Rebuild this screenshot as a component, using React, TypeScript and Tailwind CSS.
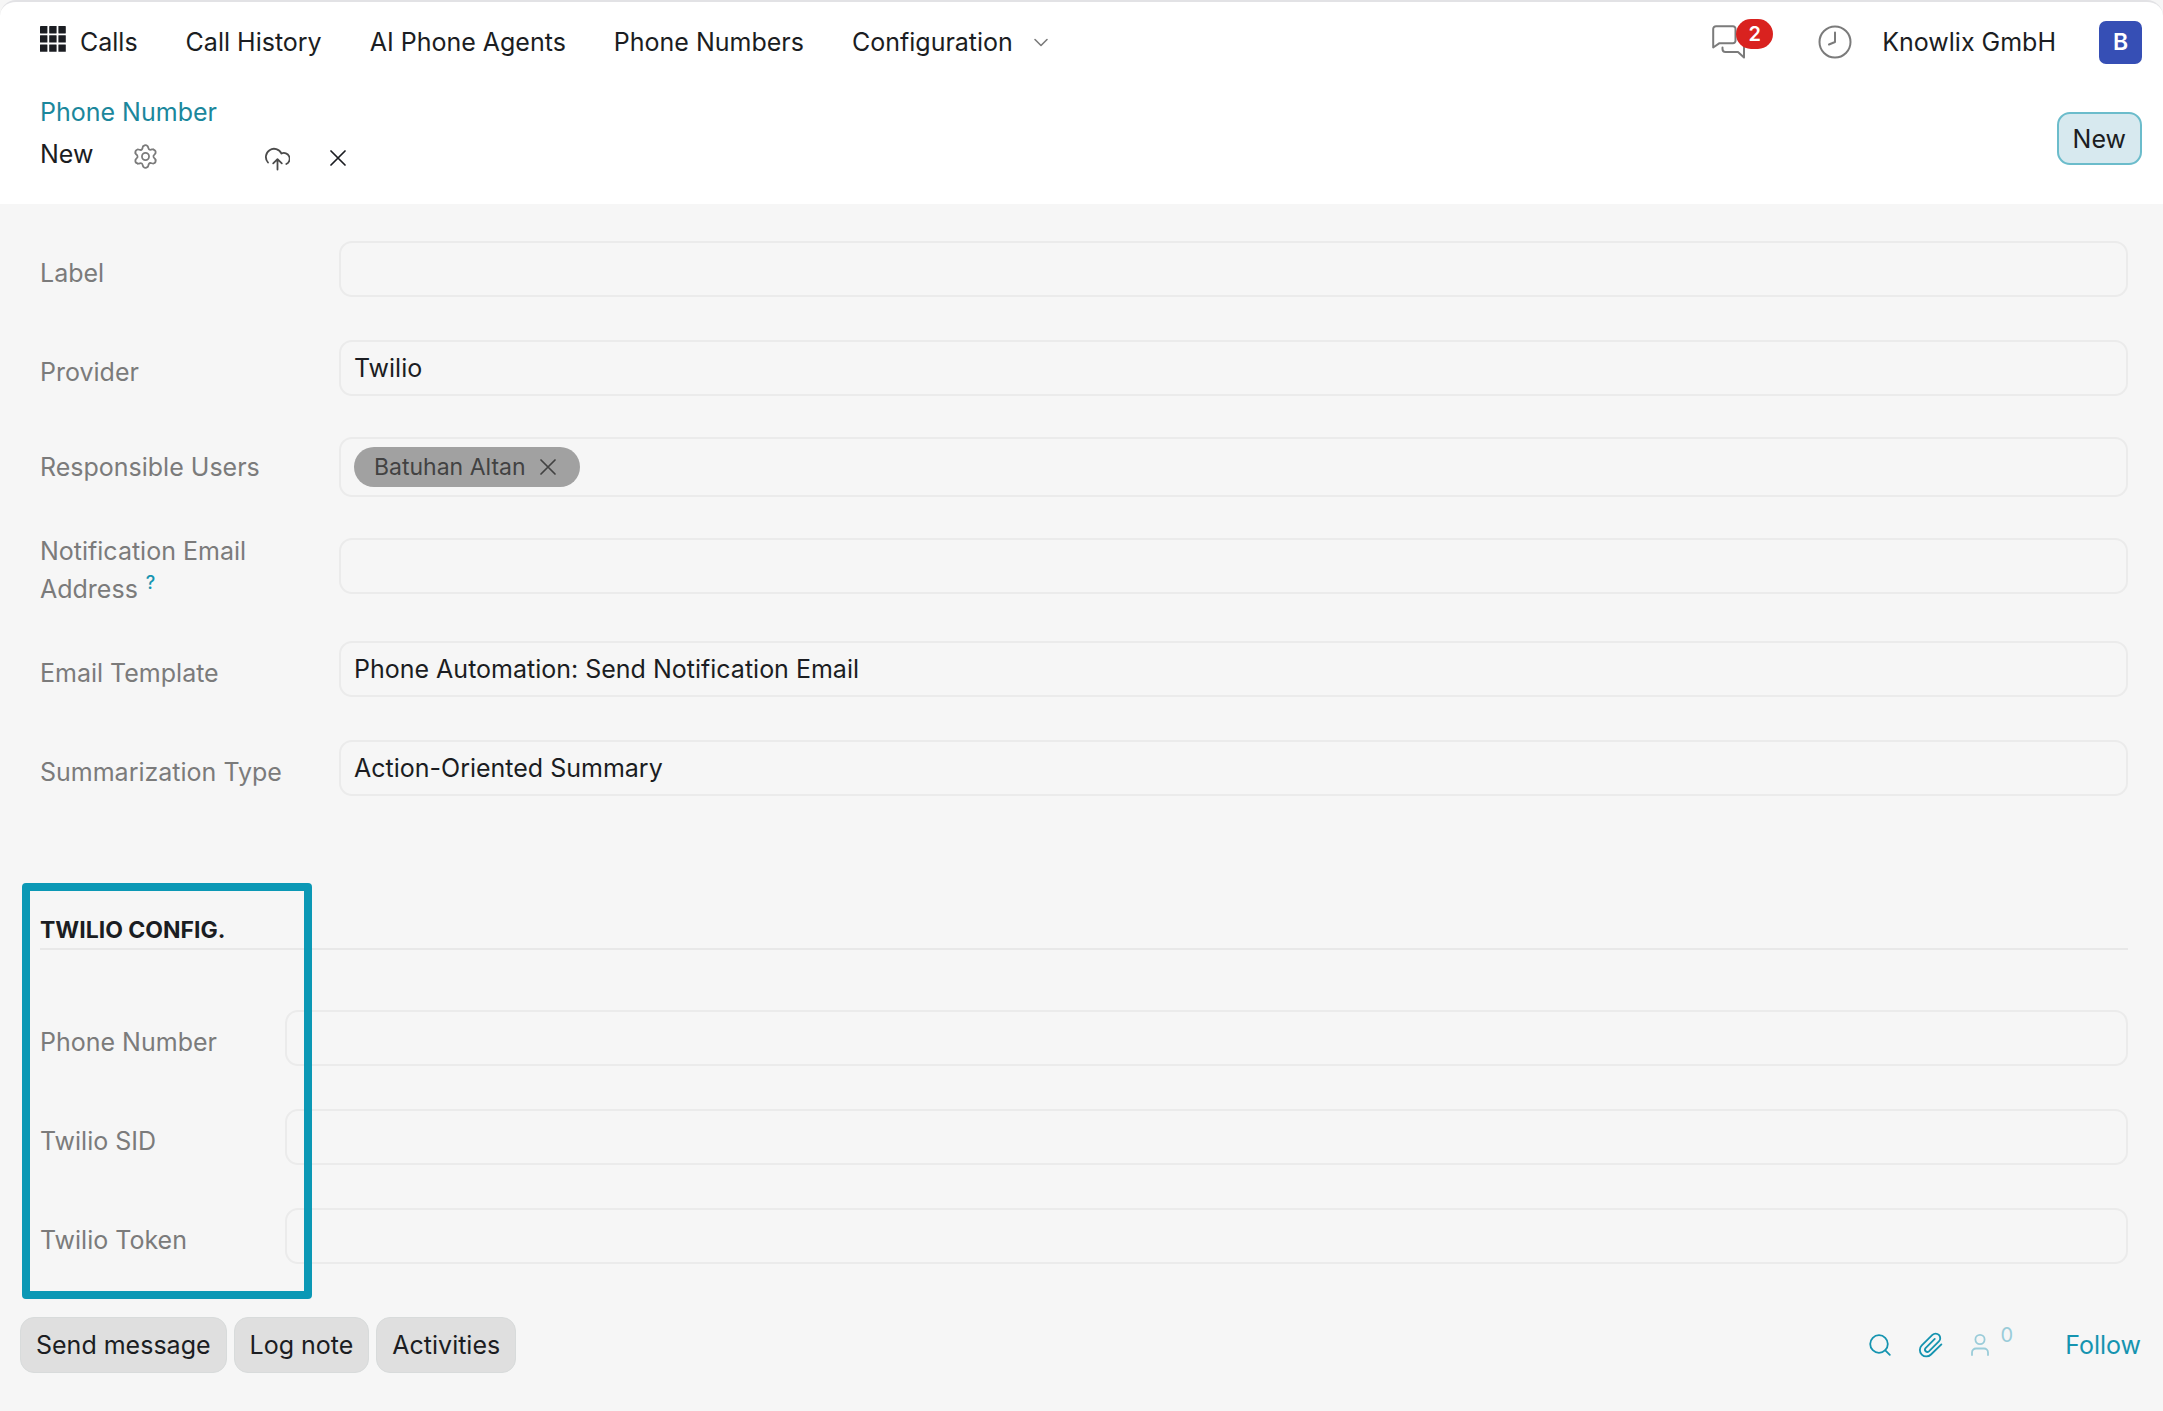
import { useState } from "react";

type FieldEntity = {
  id: string;
  label: string;
  value?: string;
  help?: boolean;
  type?: "text" | "select" | "tags";
};

const menus = ["Call History", "AI Phone Agents", "Phone Numbers"];

const mainFields: FieldEntity[] = [
  { id: "label", label: "Label" },
  { id: "provider", label: "Provider", value: "Twilio", type: "select" },
  { id: "users", label: "Responsible Users", type: "tags" },
  { id: "email", label: "Notification Email Address", help: true },
];

const templateFields: FieldEntity[] = [
  {
    id: "template",
    label: "Email Template",
    value: "Phone Automation: Send Notification Email",
  },
  {
    id: "summary",
    label: "Summarization Type",
    value: "Action-Oriented Summary",
    type: "select",
  },
];

const twilioFields: FieldEntity[] = [
  { id: "phone", label: "Phone Number" },
  { id: "sid", label: "Twilio SID" },
  { id: "token", label: "Twilio Token" },
];

const GridIcon = () => (
  <svg className="mb-1.5 h-[26px] w-[26px]" viewBox="0 0 26 26" fill="currentColor">
    {[0, 9.2, 18.4].map((y) =>
      [0, 9.2, 18.4].map((x) => (
        <rect key={`${x}-${y}`} x={x} y={y} width="7.4" height="7.4" rx="0.4" />
      ))
    )}
  </svg>
);

const CloseIcon = () => (
  <svg
    className="h-4 w-4"
    viewBox="0 0 16 16"
    fill="none"
    stroke="currentColor"
    strokeWidth="1.7"
    strokeLinecap="round"
  >
    <path d="M1 1l14 14M15 1L1 15" />
  </svg>
);

const GearIcon = () => (
  <svg
    className="h-[25px] w-[25px]"
    viewBox="0 0 24 24"
    fill="none"
    stroke="currentColor"
    strokeWidth="1.7"
    strokeLinecap="round"
  >
    {/* one tooth and one valley, turned around the centre */}
    {[0, 60, 120, 180, 240, 300].map((angle) => (
      <path
        key={angle}
        d="M10 2Q12 .2 14 2C15 3.2 14.3 5.6 16.4 5.6S18.6 4.6 19.66 5.27"
        transform={`rotate(${angle} 12 12)`}
      />
    ))}
    <circle cx="12" cy="12" r="3.4" />
  </svg>
);

const CloudUploadIcon = () => (
  <svg
    className="h-[26px] w-[26px]"
    viewBox="0 0 26 26"
    fill="none"
    stroke="currentColor"
    strokeWidth="1.8"
    strokeLinecap="round"
    strokeLinejoin="round"
  >
    <path d="M4 17.5A8.2 8.2 0 1 1 17.5 8.5 5.6 5.6 0 0 1 22.3 19" />
    <path d="M13.5 24.5V14.5M9.2 18.3L13.5 14.2l4.3 4.1" />
  </svg>
);

const ChatIcon = () => (
  <svg
    className="h-[34px] w-[34px]"
    viewBox="0 0 34 34"
    fill="none"
    stroke="currentColor"
    strokeWidth="2"
    strokeLinecap="round"
    strokeLinejoin="round"
  >
    <path d="M4 1.2h17a2.5 2.5 0 0 1 2.5 2.5v12a2.5 2.5 0 0 1-2.5 2.5H7.5L1.2 22.5V4A2.8 2.8 0 0 1 4 1.2z" />
    <path d="M10.5 22.5v1.5a3 3 0 0 0 3 3H26l6 5.5V12" />
  </svg>
);

const ClockIcon = () => (
  <svg
    className="h-[34px] w-[34px]"
    viewBox="0 0 34 34"
    fill="none"
    stroke="currentColor"
    strokeWidth="2"
    strokeLinecap="round"
    strokeLinejoin="round"
  >
    <circle cx="17" cy="17" r="15.5" />
    <path d="M17 7.5v9.5l-6 2.5" />
  </svg>
);

const Field = ({
  field,
  labelWidth,
}: {
  field: FieldEntity;
  labelWidth: string;
}) => {
  const box =
    "w-full min-w-0 flex-1 appearance-none rounded-[13px] border-2 border-[#ebebeb] bg-transparent px-[13px] text-[#1b1d22] outline-none";

  return (
    <div className="flex h-[99px] items-center">
      <label
        htmlFor={field.id}
        className={`${labelWidth} ${
          field.type === "tags" ? "" : "pt-2"
        } shrink-0 pr-10 leading-[38px] text-[#7b7b7b]`}
      >
        {field.label}
        {field.help && (
          <sup className="ml-2 text-[18px] font-medium text-[#1594b0]">?</sup>
        )}
      </label>
      {field.type === "tags" ? (
        <TagsInput id={field.id} className={box} />
      ) : field.type === "select" ? (
        <select id={field.id} className={`${box} h-14`}>
          <option>{field.value}</option>
        </select>
      ) : (
        <input
          id={field.id}
          type="text"
          defaultValue={field.value}
          className={`${box} h-14`}
        />
      )}
    </div>
  );
};

const TagsInput = ({ id, className }: { id: string; className: string }) => {
  const [tags, setTags] = useState(["Batuhan Altan"]);

  return (
    <div className={`${className} flex h-[60px] items-center gap-2`}>
      {tags.map((tag) => (
        <span
          key={tag}
          className="flex h-10 items-center gap-[14px] rounded-full bg-[#a1a1a1] pr-6 pl-5 text-[23px] text-[#424242]"
        >
          {tag}
          <button
            aria-label="Delete"
            onClick={() => setTags(tags.filter((t) => t !== tag))}
          >
            <CloseIcon />
          </button>
        </span>
      ))}
      <input id={id} className="min-w-0 flex-1 bg-transparent outline-none" />
    </div>
  );
};

const App = () => {
  return (
    <div className="flex min-h-screen flex-col bg-[#f6f6f6] font-['Inter',sans-serif] text-[25px] leading-[38px] text-[#1b1d22]">
      <header className="rounded-t-2xl border-t-2 border-[#e2e2e5] bg-white">
        {/* NAVBAR */}
        <nav className="flex h-20 items-center justify-between pr-[21px] pl-10">
          <div className="flex items-center gap-12">
            <a href="#calls" className="flex items-center gap-[14px]">
              <GridIcon />
              Calls
            </a>
            {menus.map((item) => (
              <a key={item} href="#menu">
                {item}
              </a>
            ))}
            <button className="flex items-center gap-5">
              Configuration
              <svg
                className="h-4 w-4 text-[#7b7b7b]"
                viewBox="0 0 16 16"
                fill="none"
                stroke="currentColor"
                strokeWidth="1.6"
                strokeLinecap="round"
                strokeLinejoin="round"
              >
                <path d="M2 5.5l6 6 6-6" />
              </svg>
            </button>
          </div>
          <div className="flex items-center">
            <button
              aria-label="Messages"
              className="relative mr-[72px] text-[#7b7b7b]"
            >
              <ChatIcon />
              <span className="absolute -top-1.5 left-6 flex h-[30px] w-[37px] items-center justify-center rounded-full bg-[#d9221f] text-xl font-semibold text-white">
                2
              </span>
            </button>
            <button aria-label="Activities" className="mr-[30px] text-[#7b7b7b]">
              <ClockIcon />
            </button>
            <button className="mr-[43px]">Knowlix GmbH</button>
            <button className="flex h-[43px] w-[43px] items-center justify-center rounded-[7px] bg-[#364fb5] text-[23px] font-semibold text-white">
              B
            </button>
          </div>
        </nav>

        {/* CONTROL PANEL */}
        <div className="flex h-[122px] items-start justify-between pt-[11px] pr-[21px] pl-10">
          <div>
            <a href="#numbers" className="block text-[#1b879c]">
              Phone Number
            </a>
            <div className="mt-1 flex items-center">
              <span>New</span>
              <button aria-label="Actions" className="ml-10 pt-1 text-[#7b7b7b]">
                <GearIcon />
              </button>
              <div className="ml-[106px] flex items-center gap-10 pt-2">
                <button aria-label="Save" className="text-[#4b4b4b]">
                  <CloudUploadIcon />
                </button>
                <button aria-label="Discard">
                  <CloseIcon />
                </button>
              </div>
            </div>
          </div>
          <button className="mt-[19px] h-[53px] rounded-[13px] border-2 border-[#6bbccb] bg-[#d7e9ef] px-[14px]">
            New
          </button>
        </div>
      </header>

      {/* FORM */}
      <main className="pt-[15px] pr-[35px] pl-10">
        <div className="flex flex-col gap-1">
          <div>
            {mainFields.map((field) => (
              <Field key={field.id} field={field} labelWidth="w-[299px]" />
            ))}
          </div>
          <div>
            {templateFields.map((field) => (
              <Field key={field.id} field={field} labelWidth="w-[299px]" />
            ))}
          </div>
        </div>

        <section className="relative mt-[95px]">
          <h2 className="border-b-2 border-[#e8e8e8] text-[23px] leading-9 font-bold">
            TWILIO CONFIG.
          </h2>
          <div className="pt-[38px]">
            {twilioFields.map((field) => (
              <Field key={field.id} field={field} labelWidth="w-[245px]" />
            ))}
          </div>
          <div className="pointer-events-none absolute -top-[29px] -bottom-[14px] -left-[18px] w-[290px] rounded border-8 border-[#0b98b5]" />
        </section>
      </main>

      {/* CHATTER */}
      <footer className="flex items-center justify-between pt-8 pr-[22px] pl-5">
        <div className="flex gap-[7px]">
          {["Send message", "Log note", "Activities"].map((item) => (
            <button
              key={item}
              className="h-14 rounded-[14px] border border-[#d8dbdb] bg-[#dfdfdf] px-[15px]"
            >
              {item}
            </button>
          ))}
        </div>
        <div className="flex items-center text-[#1594b0]">
          <button aria-label="Search" className="mr-[26px]">
            <svg
              className="h-[22px] w-[22px]"
              viewBox="0 0 22 22"
              fill="none"
              stroke="currentColor"
              strokeWidth="1.8"
              strokeLinecap="round"
            >
              <circle cx="10" cy="10" r="8.8" />
              <path d="M16.3 16.3l4.5 4.5" />
            </svg>
          </button>
          <button aria-label="Attachments" className="mr-7">
            <svg
              className="h-[26px] w-[26px]"
              viewBox="0 0 24 24"
              fill="none"
              stroke="currentColor"
              strokeWidth="1.7"
              strokeLinecap="round"
              strokeLinejoin="round"
            >
              <path d="M22.5 11.5l-9.6 9.3a6 6 0 0 1-8.5-8.5l9.8-9.6a4.2 4.2 0 0 1 6 6l-9.2 9.2a2.2 2.2 0 0 1-3.1-3.1l8.5-8.4" />
            </svg>
          </button>
          <button
            aria-label="Followers"
            className="mr-[52px] flex items-center gap-3 text-[#9accd9]"
          >
            <svg
              className="h-[22px] w-[18px]"
              viewBox="0 0 18 22"
              fill="none"
              stroke="currentColor"
              strokeWidth="1.8"
              strokeLinecap="round"
            >
              <circle cx="9" cy="5.5" r="4.6" />
              <path d="M1 21v-2.500a4 4 0 0 1 4-4h8a4 4 0 0 1 4 4V21" />
            </svg>
            <sup className="text-xl">0</sup>
          </button>
          <button>Follow</button>
        </div>
      </footer>
    </div>
  );
};

export default App;
